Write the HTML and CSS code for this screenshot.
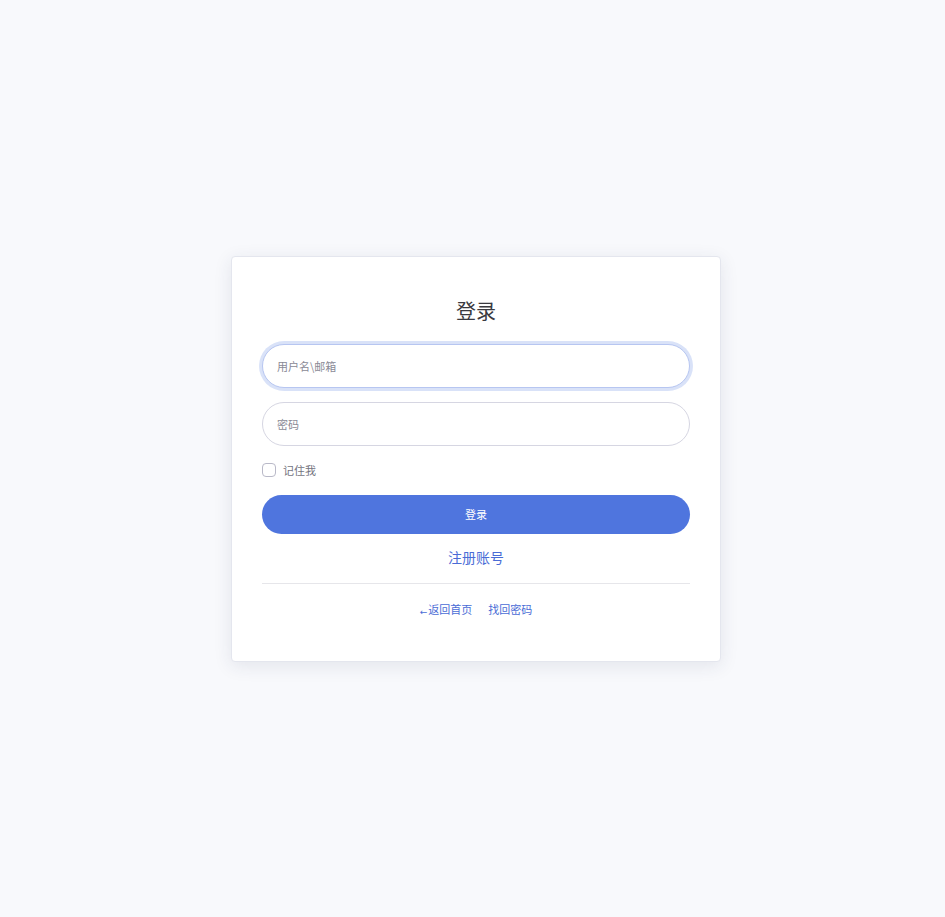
FILE: index.html
```html
<!DOCTYPE html>
<html lang="zh-CN">
<head>
<meta charset="utf-8">
<title>登录</title>
<link rel="stylesheet" href="styles.css">
</head>
<body>
<div class="page">
  <form class="card">
    <h1 class="title">登录</h1>
    <input class="field focused" type="text" placeholder="用户名\邮箱">
    <input class="field" type="password" placeholder="密码">
    <label class="remember"><span class="box"></span><span>记住我</span></label>
    <button class="btn" type="button">登录</button>
    <a class="register" href="#">注册账号</a>
    <div class="divider"></div>
    <div class="links">
      <a href="#"><span class="arrow">←</span>返回首页</a>
      <a href="#">找回密码</a>
    </div>
  </form>
</div>
</body>
</html>
```
FILE: styles.css
```css
* { box-sizing: border-box; }
html, body { margin: 0; height: 100%; }
body {
  background: #f8f9fc;
  font-family: "Noto Sans CJK SC", "Noto Sans", sans-serif;
}
.page {
  height: 100%;
  display: flex;
  align-items: center;
  justify-content: center;
  padding-left: 7px;
}
.card {
  width: 490px;
  height: 406px;
  background: #fff;
  border: 1px solid #e4e6ee;
  border-radius: 4px;
  box-shadow: 0 4px 18px rgba(40, 50, 90, 0.10);
  padding: 40px 30px 0;
  display: flex;
  flex-direction: column;
}
.title {
  margin: 0 0 19px;
  text-align: center;
  font-size: 20px;
  line-height: 28px;
  font-weight: 400;
  color: #3a3a40;
}
.field {
  display: block;
  width: 100%;
  height: 44px;
  border: 1px solid #d6d6e2;
  border-radius: 22px;
  padding: 0 14px;
  font-family: inherit;
  font-size: 11px;
  color: #333;
  background: #fff;
  outline: none;
  margin-bottom: 14px;
}
.field::placeholder { color: #8a8a96; }
.field.focused {
  border-color: #b7c6f1;
  box-shadow: 0 0 0 3px rgba(120, 150, 230, 0.28);
  caret-color: #333;
}
.remember {
  display: flex;
  align-items: center;
  gap: 7px;
  height: 20px;
  margin: 0;
  font-size: 11px;
  color: #74747e;
}
.box {
  width: 14px;
  height: 14px;
  border: 1px solid #b9b9c8;
  border-radius: 4px;
  background: #fff;
}
.btn {
  margin-top: 15px;
  height: 39px;
  border: 0;
  border-radius: 20px;
  background: #4f75de;
  color: #fff;
  font-family: inherit;
  font-size: 11px;
}
.register {
  margin-top: 13px;
  text-align: center;
  font-size: 14px;
  line-height: 20px;
  color: #4a6cd6;
  text-decoration: none;
}
.divider {
  margin-top: 16px;
  height: 1px;
  background: #e6e6ea;
}
.links {
  margin-top: 16px;
  display: flex;
  justify-content: center;
  gap: 16px;
  font-size: 11px;
  line-height: 18px;
}
.links a {
  color: #4a6cd6;
  text-decoration: none;
}
.arrow {
  font-family: "DejaVu Sans", sans-serif;
  font-size: 9px;
  position: relative;
  top: 1px;
  margin-right: 1px;
}
```
